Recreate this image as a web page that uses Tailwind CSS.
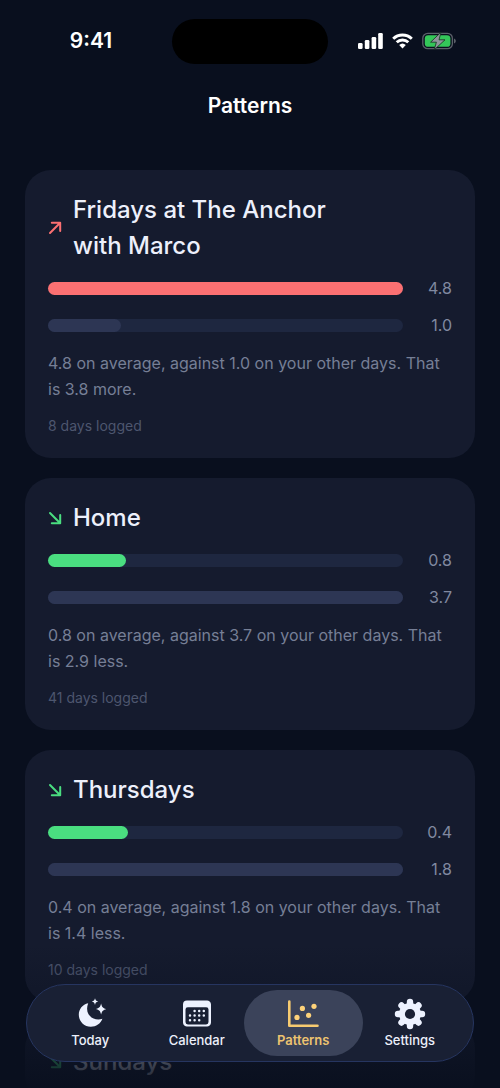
<!DOCTYPE html>
<html lang="en">
<head>
<meta charset="utf-8">
<meta name="viewport" content="width=device-width, initial-scale=1">
<title>Patterns</title>
<script src="https://cdn.jsdelivr.net/npm/@tailwindcss/browser@4"></script>
</head>
<body class="relative flex h-dvh flex-col overflow-hidden bg-[#090f1e] font-['Inter',sans-serif] text-[#edf0fb]">

<!-- Status bar -->
<div class="grid shrink-0 grid-cols-[1fr_156px_1fr] items-center pt-[18px]">
  <time class="pl-2.5 text-center text-[21px] leading-[46px] font-semibold text-white">9:41</time>
  <div class="h-[45px] rounded-full bg-black"></div>
  <div class="flex items-center gap-[9px] pl-[30px]">
    <svg class="h-4 w-[25px]" viewBox="0 0 25 16" fill="#fff" aria-label="Signal"><rect x="0" y="10" width="4.6" height="6" rx="1.3"/><rect x="6.8" y="7" width="4.6" height="9" rx="1.3"/><rect x="13.6" y="4" width="4.6" height="12" rx="1.3"/><rect x="20.2" y="0" width="4.6" height="16" rx="1.3"/></svg>
    <svg class="h-4 w-[21px]" viewBox="0 0 21 16" fill="none" stroke="#fff" aria-label="Wi-Fi"><path d="M1.2 5.8a13.3 13.3 0 0 1 18.6 0M4.7 9.3a8.3 8.3 0 0 1 11.6 0" stroke-width="2.9"/><path d="M10.5 15.4 7.2 12a4.8 4.8 0 0 1 6.6 0z" fill="#fff" stroke="none"/></svg>
    <svg class="h-[18px] w-[35px]" viewBox="0 0 35 18" aria-label="Battery charging"><rect x=".8" y="1.3" width="29.6" height="15.4" rx="5" fill="none" stroke="#5b6069" stroke-width="1.3"/><rect x="2.800" y="3.2" width="25.600" height="11.600" rx="3.4" fill="#34c759"/><path d="M32 6.5c2.4.8 2.4 4.2 0 5z" fill="#5b6069"/><path d="M19 .2 8.600 10.200h5.800L12.200 17.800 23 7.800h-6z" fill="#8f949b" stroke="#14301f" stroke-width=".8"/></svg>
  </div>
</div>

<header class="shrink-0 pt-[26px]">
  <h1 class="text-center text-[21px] leading-8 font-semibold text-white">Patterns</h1>
</header>

<main class="flex min-h-0 flex-1 flex-col gap-5 overflow-hidden px-[25px] pt-12">

  <article class="shrink-0 rounded-[26px] bg-[#151b2e] px-[23px] py-[22px]">
    <div class="flex items-center gap-[9px] pr-20">
      <svg class="size-4 shrink-0" viewBox="0 0 16 16" fill="none" stroke="#fb7072" stroke-width="2" stroke-linecap="round" stroke-linejoin="round" aria-hidden="true"><path d="M2 13 12.2 2.8M3.800 2.8h8.4v8.2"/></svg>
      <h2 class="text-2xl leading-9 font-medium">Fridays at The Anchor with Marco</h2>
    </div>
    <div class="mt-3 flex h-6 items-center gap-[13px]">
      <div class="h-[13px] flex-1 rounded-full bg-[#1e2740]"><div class="h-full rounded-full bg-[#fb7072]" style="width:100%"></div></div>
      <span class="w-9 text-right text-base text-[#8089a0]">4.8</span>
    </div>
    <div class="mt-[13px] flex h-6 items-center gap-[13px]">
      <div class="h-[13px] flex-1 rounded-full bg-[#1e2740]"><div class="h-full rounded-full bg-[#2d3654]" style="width:20.5%"></div></div>
      <span class="w-9 text-right text-base text-[#8089a0]">1.0</span>
    </div>
    <p class="mt-[13px] text-base leading-[26px] text-[#767f96]">4.8 on average, against 1.0 on your other days. That is 3.8 more.</p>
    <p class="mt-3.5 text-sm leading-5 text-[#4d566e]">8 days logged</p>
  </article>

  <article class="shrink-0 rounded-[26px] bg-[#151b2e] px-[23px] py-[22px]">
    <div class="flex items-center gap-[9px] pr-20">
      <svg class="size-4 shrink-0" viewBox="0 0 16 16" fill="none" stroke="#4ade80" stroke-width="2" stroke-linecap="round" stroke-linejoin="round" aria-hidden="true"><path d="M2 3 12.2 13.2M3.800 13.2h8.4V5"/></svg>
      <h2 class="text-2xl leading-9 font-medium">Home</h2>
    </div>
    <div class="mt-3 flex h-6 items-center gap-[13px]">
      <div class="h-[13px] flex-1 rounded-full bg-[#1e2740]"><div class="h-full rounded-full bg-[#4ade80]" style="width:22%"></div></div>
      <span class="w-9 text-right text-base text-[#8089a0]">0.8</span>
    </div>
    <div class="mt-[13px] flex h-6 items-center gap-[13px]">
      <div class="h-[13px] flex-1 rounded-full bg-[#1e2740]"><div class="h-full rounded-full bg-[#2d3654]" style="width:100%"></div></div>
      <span class="w-9 text-right text-base text-[#8089a0]">3.7</span>
    </div>
    <p class="mt-[13px] text-base leading-[26px] text-[#767f96]">0.8 on average, against 3.7 on your other days. That is 2.9 less.</p>
    <p class="mt-3.5 text-sm leading-5 text-[#4d566e]">41 days logged</p>
  </article>

  <article class="shrink-0 rounded-[26px] bg-[#151b2e] px-[23px] py-[22px]">
    <div class="flex items-center gap-[9px] pr-20">
      <svg class="size-4 shrink-0" viewBox="0 0 16 16" fill="none" stroke="#4ade80" stroke-width="2" stroke-linecap="round" stroke-linejoin="round" aria-hidden="true"><path d="M2 3 12.2 13.2M3.800 13.2h8.4V5"/></svg>
      <h2 class="text-2xl leading-9 font-medium">Thursdays</h2>
    </div>
    <div class="mt-3 flex h-6 items-center gap-[13px]">
      <div class="h-[13px] flex-1 rounded-full bg-[#1e2740]"><div class="h-full rounded-full bg-[#4ade80]" style="width:22.5%"></div></div>
      <span class="w-9 text-right text-base text-[#8089a0]">0.4</span>
    </div>
    <div class="mt-[13px] flex h-6 items-center gap-[13px]">
      <div class="h-[13px] flex-1 rounded-full bg-[#1e2740]"><div class="h-full rounded-full bg-[#2d3654]" style="width:100%"></div></div>
      <span class="w-9 text-right text-base text-[#8089a0]">1.8</span>
    </div>
    <p class="mt-[13px] text-base leading-[26px] text-[#767f96]">0.4 on average, against 1.8 on your other days. That is 1.4 less.</p>
    <p class="mt-3.5 text-sm leading-5 text-[#4d566e]">10 days logged</p>
  </article>

  <article class="shrink-0 rounded-[26px] bg-[#151b2e] px-[23px] py-[22px]">
    <div class="flex items-center gap-[9px] pr-20">
      <svg class="size-4 shrink-0" viewBox="0 0 16 16" fill="none" stroke="#4ade80" stroke-width="2" stroke-linecap="round" stroke-linejoin="round" aria-hidden="true"><path d="M2 3 12.2 13.2M3.800 13.2h8.4V5"/></svg>
      <h2 class="text-2xl leading-9 font-medium">Sundays</h2>
    </div>
  </article>
</main>

<!-- Fade under the tab bar -->
<div class="pointer-events-none absolute inset-x-0 bottom-0 h-36 bg-linear-to-b from-[#090f1e]/0 via-[#090f1e]/40 to-[#090f1e]/95"></div>

<!-- Tab bar -->
<nav class="absolute inset-x-[26px] bottom-[26px] grid grid-cols-4 rounded-full border border-[#263560] bg-[#192034] px-[10px] py-[5px] text-[13px] leading-4 font-medium">
  <a href="#today" class="flex h-[66px] flex-col items-center gap-[2px] pt-2">
    <svg class="size-8" viewBox="-1 0 32 32" fill="#edf2ff" aria-hidden="true"><path d="M13.2 5.2C7.500 6.400 3.800 11 3.800 16.600c0 6.800 5.300 12.200 12 12.200 5.300 0 9.900-3.200 11.600-8-1.300.4-2.600.6-4 .6-6.600 0-11.300-4.400-11.300-10.600 0-2 .4-3.800 1.100-5.600z"/><path d="M20 .3c.6 2.100 1.100 2.800 3.200 3.300-2.100.6-2.700 1.200-3.200 3.300-.6-2.100-1.100-2.700-3.200-3.300C18.900 3.100 19.500 2.400 20 .3zM26.100 5.600c.9 3.800 1.800 4.600 5 5.500-3.200.9-4.100 1.800-5 5.500-.9-3.700-1.800-4.600-5.400-5.500 3.600-.9 4.500-1.700 5.400-5.500z"/></svg>
    Today
  </a>
  <a href="#calendar" class="flex h-[66px] flex-col items-center gap-[2px] pt-2">
    <svg class="size-8" viewBox="0 0 32 32" aria-hidden="true"><path fill="#edf2ff" fill-rule="evenodd" d="M6 2.500h19.500A4 4 0 0 1 30 6.500v18a4 4 0 0 1-4.500 4h-19A4 4 0 0 1 2 24.500v-18a4 4 0 0 1 4-4zM6.800 9.200A2.300 2.300 0 0 0 4.500 11.500v12.500a2.400 2.400 0 0 0 2.400 2.400h18.200a2.400 2.400 0 0 0 2.400-2.400V11.500a2.300 2.300 0 0 0-2.300-2.300z"/><path d="M13.600 13h0M18.200 13h0M22.800 13h0M9 17.600h0M13.600 17.600h0M18.200 17.600h0M22.800 17.600h0M9 22.200h0M13.600 22.200h0M18.200 22.200h0" stroke="#edf2ff" stroke-width="2.500" stroke-linecap="round"/></svg>
    Calendar
  </a>
  <a href="#patterns" aria-current="page" class="-mx-[6px] flex h-[66px] flex-col items-center gap-[2px] rounded-full bg-[#3b435a] pt-2 font-semibold text-[#edc370]">
    <svg class="size-8" viewBox="0 0 32 32" aria-hidden="true"><path d="M2.300 3.500v24.200H30.500" fill="none" stroke="#f7cb70" stroke-width="2.600" stroke-linecap="round" stroke-linejoin="round"/><g fill="#fdd27a"><circle cx="10" cy="19.400" r="2.600"/><circle cx="15.400" cy="10.400" r="2.600"/><circle cx="21.600" cy="17.300" r="2.600"/><circle cx="27" cy="8.300" r="2.600"/></g></svg>
    Patterns
  </a>
  <a href="#settings" class="flex h-[66px] flex-col items-center gap-[2px] pt-2">
    <svg class="size-8" viewBox="0 0 32 32" aria-hidden="true"><g stroke="#edf2ff" stroke-width="6.400" stroke-linecap="round"><path d="M16 4v24M4 16h24M7.500 7.500l17 17M24.500 7.500l-17 17"/></g><circle cx="16" cy="16" r="11" fill="#edf2ff"/><circle cx="16" cy="16" r="5.100" fill="#192034"/></svg>
    Settings
  </a>
</nav>
</body>
</html>
